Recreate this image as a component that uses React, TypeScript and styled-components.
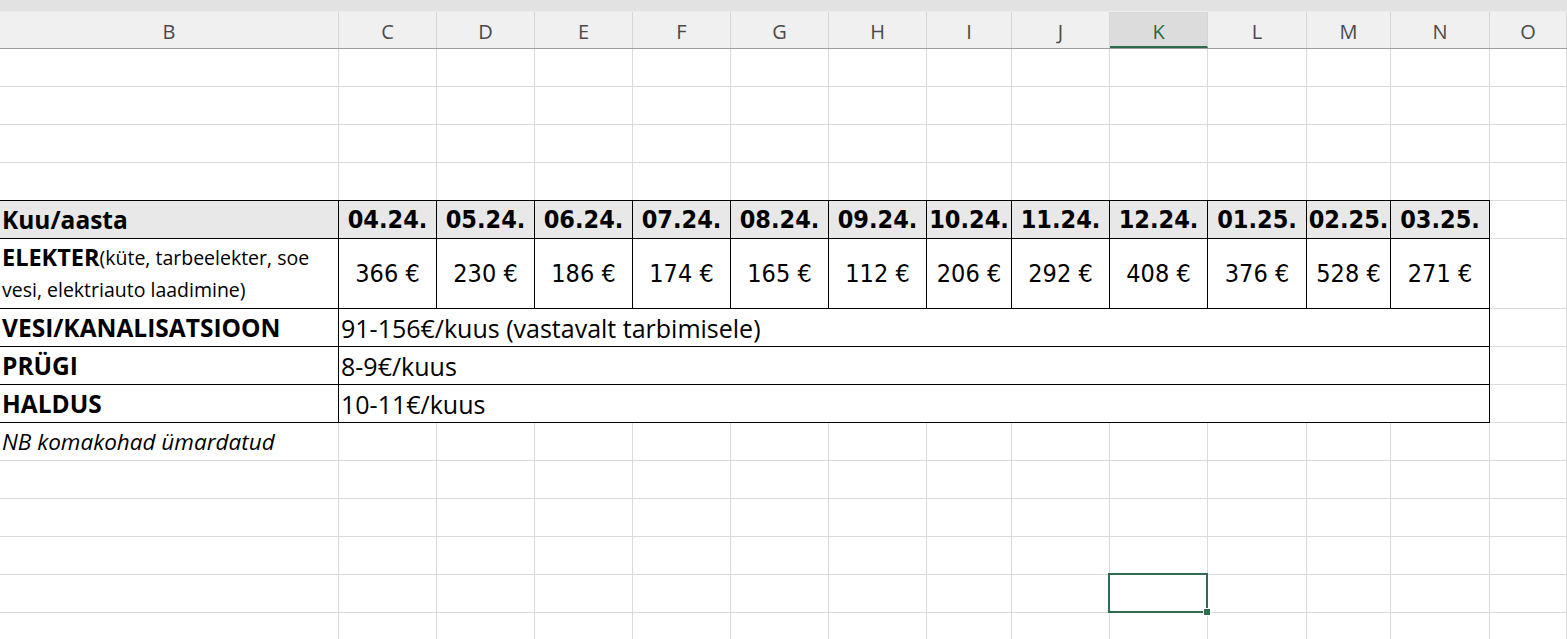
import * as React from 'react';
import styled, { createGlobalStyle, css } from 'styled-components';

const GlobalStyle = createGlobalStyle`
  html, body {
    margin: 0;
    padding: 0;
    background: #fff;
    overflow: hidden;
  }
`;

const COLS = '339px 98px 98px 98px 98px 98px 98px 85px 98px 98px 99px 84px 99px 1fr';
const LETTERS = ['B', 'C', 'D', 'E', 'F', 'G', 'H', 'I', 'J', 'K', 'L', 'M', 'N', 'O'];
const TEXT_FONT = `"Open Sans", "Noto Sans", sans-serif`;
const NUM_FONT = `"Liberation Sans Narrow", "DejaVu Sans Condensed", "Liberation Sans", sans-serif`;

const Sheet = styled.div`
  width: 1567px;
  height: 639px;
  overflow: hidden;
  display: flex;
  flex-direction: column;
  background: #fff;
`;

const TopStrip = styled.div`
  height: 11px;
  flex: none;
  background: #e2e2e2;
  border-bottom: 1px solid #ececec;
`;

const ColumnBar = styled.div`
  display: grid;
  grid-template-columns: ${COLS};
  height: 36px;
  flex: none;
  background: #f0f0f0;
  border-bottom: 1px solid #9e9e9e;
`;

const ColumnLetter = styled.div<{ $active?: boolean }>`
  display: flex;
  align-items: center;
  justify-content: center;
  font-family: ${TEXT_FONT};
  font-size: 20px;
  color: #4a4a4a;
  border-right: 1px solid #d6d6d6;
  box-sizing: border-box;
  padding-top: 2px;
  ${p => p.$active && css`
    background: #dcdcdc;
    color: #1e6e42;
    border-bottom: 2px solid #2e6a4b;
    padding-top: 4px;
  `}
`;

const Row = styled.div<{ $h?: number }>`
  display: grid;
  grid-template-columns: ${COLS};
  height: ${p => p.$h ?? 38}px;
  flex: none;
`;

const Cell = styled.div<{
  $span?: number;
  $boxed?: boolean;
  $shade?: boolean;
  $edgeTop?: boolean;
  $center?: boolean;
  $bold?: boolean;
  $num?: boolean;
  $italic?: boolean;
  $open?: boolean;
}>`
  position: relative;
  box-sizing: border-box;
  display: flex;
  align-items: center;
  justify-content: ${p => (p.$center ? 'center' : 'flex-start')};
  padding: 0 2px;
  overflow: ${p => (p.$open ? 'visible' : 'hidden')};
  white-space: nowrap;
  grid-column: span ${p => p.$span ?? 1};
  border-right: 1px solid ${p => (p.$boxed ? '#000' : '#dadada')};
  border-bottom: 1px solid ${p => (p.$boxed ? '#000' : '#dadada')};
  background: ${p => (p.$shade ? '#e8e8e8' : 'transparent')};
  box-shadow: ${p => (p.$edgeTop ? '0 -1px 0 #000' : 'none')};
  font-family: ${p => (p.$num ? NUM_FONT : TEXT_FONT)};
  font-size: ${p => (p.$num ? '25px' : p.$bold ? '24.5px' : p.$italic ? '22.5px' : '25px')};
  font-weight: ${p => (p.$bold ? 700 : 400)};
  font-style: ${p => (p.$italic ? 'italic' : 'normal')};
  color: #000;
`;

const WrapText = styled.div`
  display: flex;
  flex-direction: column;
  margin-top: -1px;
`;

const NoteLine = styled.div`
  height: 32px;
  display: flex;
  align-items: center;
  font-size: 19.5px;
  font-weight: 400;
  b {
    font-size: 23.5px;
    font-weight: 700;
  }
`;

const Selection = styled.div`
  position: absolute;
  z-index: 2;
  left: -2px;
  top: -2px;
  right: -1px;
  bottom: -1px;
  border: 2px solid #2f6b4e;
  pointer-events: none;
  &::after {
    content: '';
    position: absolute;
    right: -5px;
    bottom: -5px;
    width: 6px;
    height: 6px;
    background: #2f6b4e;
    border: 1px solid #fff;
  }
`;

const months = ['04.24.', '05.24.', '06.24.', '07.24.', '08.24.', '09.24.', '10.24.', '11.24.', '12.24.', '01.25.', '02.25.', '03.25.'];
const costs = [366, 230, 186, 174, 165, 112, 206, 292, 408, 376, 528, 271];

const EmptyRow = ({ selected }: { selected?: number }) => (
  <Row>
    {LETTERS.map((l, i) => (
      <Cell key={l} $open={selected === i}>{selected === i && <Selection />}</Cell>
    ))}
  </Row>
);

const RangeRow = ({ label, value }: { label: string; value: string }) => (
  <Row>
    <Cell $boxed $bold>{label}</Cell>
    <Cell $boxed $span={12}>{value}</Cell>
    <Cell />
  </Row>
);

export default function App() {
  return (
    <Sheet>
      <GlobalStyle />
      <TopStrip />
      <ColumnBar>
        {LETTERS.map(l => (
          <ColumnLetter key={l} $active={l === 'K'}>{l}</ColumnLetter>
        ))}
      </ColumnBar>
      <EmptyRow />
      <EmptyRow />
      <EmptyRow />
      <EmptyRow />
      <Row>
        <Cell $boxed $shade $edgeTop $bold>Kuu/aasta</Cell>
        {months.map(m => (
          <Cell key={m} $boxed $shade $edgeTop $center $bold $num>{m}</Cell>
        ))}
        <Cell />
      </Row>
      <Row $h={70}>
        <Cell $boxed>
          <WrapText>
            <NoteLine><b>ELEKTER</b>(küte, tarbeelekter, soe</NoteLine>
            <NoteLine>vesi, elektriauto laadimine)</NoteLine>
          </WrapText>
        </Cell>
        {costs.map((c, i) => (
          <Cell key={i} $boxed $center $num>{c} €</Cell>
        ))}
        <Cell />
      </Row>
      <RangeRow label="VESI/KANALISATSIOON" value="91-156€/kuus (vastavalt tarbimisele)" />
      <RangeRow label="PRÜGI" value="8-9€/kuus" />
      <RangeRow label="HALDUS" value="10-11€/kuus" />
      <Row>
        <Cell $italic>NB komakohad ümardatud</Cell>
        {LETTERS.slice(1).map(l => (
          <Cell key={l} />
        ))}
      </Row>
      <EmptyRow />
      <EmptyRow />
      <EmptyRow />
      <EmptyRow selected={9} />
      <EmptyRow />
    </Sheet>
  );
}
